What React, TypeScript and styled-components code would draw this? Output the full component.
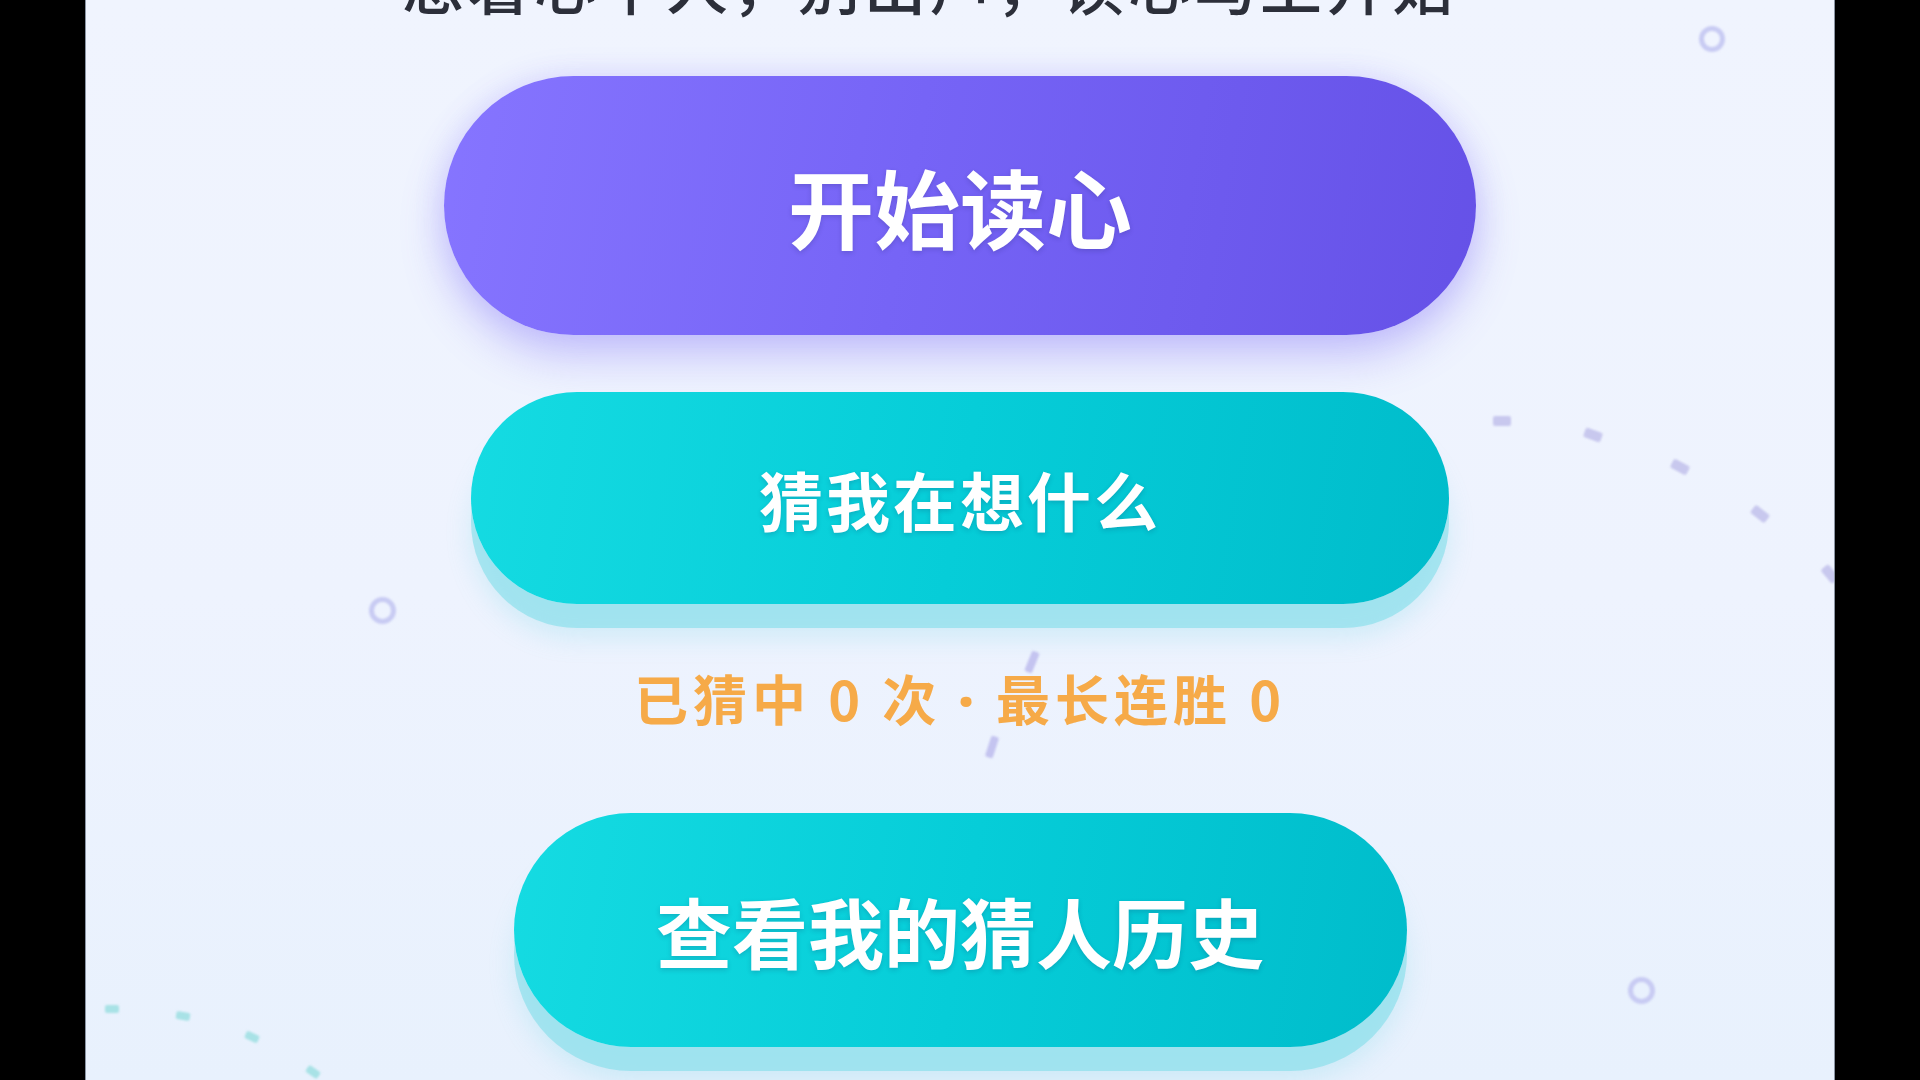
import React from "react";
import styled, { createGlobalStyle } from "styled-components";

const Global = createGlobalStyle`
  html, body { margin: 0; padding: 0; background: #000; }
  body { font-family: "Noto Sans CJK SC", "Noto Sans", sans-serif; }
  * { box-sizing: border-box; }
`;

const Page = styled.div`
  width: 1920px;
  height: 1080px;
  background: #000;
  display: flex;
  justify-content: center;
`;

const Frame = styled.main`
  position: relative;
  width: 1750px;
  height: 1080px;
  overflow: hidden;
  border-left: 1px solid #8a94a3;
  border-right: 1px solid #8a94a3;
  background: linear-gradient(180deg, #f0f4fe 0%, #eef3fe 55%, #e8f1fd 100%);
  display: flex;
  flex-direction: column;
  align-items: center;
`;

const Tagline = styled.p`
  margin: -48px 0 0 -60px;
  font-size: 62px;
  line-height: 1;
  font-weight: 500;
  letter-spacing: 4px;
  color: #2c2f3a;
  white-space: nowrap;
`;

const PillButton = styled.button<{ $w: number; $h: number; $variant: "purple" | "teal"; $fs: number; $ls?: number; $mt: number }>`
  margin-top: ${(p) => p.$mt}px;
  width: ${(p) => p.$w}px;
  height: ${(p) => p.$h}px;
  flex-shrink: 0;
  border: none;
  border-radius: ${(p) => p.$h / 2}px;
  display: flex;
  align-items: center;
  justify-content: center;
  font-family: "Noto Sans CJK SC", "Noto Sans", sans-serif;
  font-weight: 700;
  font-size: ${(p) => p.$fs}px;
  letter-spacing: ${(p) => p.$ls ?? 0}px;
  color: #ffffff;
  text-shadow: 0 2px 5px rgba(20, 30, 80, 0.18);
  cursor: pointer;
  background: ${(p) =>
    p.$variant === "purple"
      ? "linear-gradient(100deg, #8675ff 0%, #7664f6 45%, #6551e7 100%)"
      : "linear-gradient(100deg, #15dbe2 0%, #06cdd8 50%, #00bccb 100%)"};
  box-shadow: ${(p) =>
    p.$variant === "purple"
      ? "0 22px 44px rgba(116, 96, 245, 0.32), 0 0 30px rgba(140, 120, 255, 0.18)"
      : "0 24px 0 rgba(128, 222, 234, 0.6), 0 34px 24px rgba(120, 215, 230, 0.25)"};
`;

const Stats = styled.div`
  margin-top: 64px;
  font-size: 54px;
  line-height: 60px;
  font-weight: 700;
  letter-spacing: 5px;
  color: #f6aa48;
  white-space: nowrap;
`;

const Dot = styled.span`
  font-family: "Noto Sans", sans-serif;
  font-weight: 900;
  margin: 0 17px;
`;

const Ring = styled.span<{ $x: number; $y: number; $d: number }>`
  position: absolute;
  left: ${(p) => p.$x - p.$d / 2}px;
  top: ${(p) => p.$y - p.$d / 2}px;
  width: ${(p) => p.$d}px;
  height: ${(p) => p.$d}px;
  border-radius: 50%;
  border: 5px solid #c8cbf3;
  filter: blur(1px);
`;

const Dash = styled.span<{ $x: number; $y: number; $w: number; $h: number; $r: number; $c: string }>`
  position: absolute;
  left: ${(p) => p.$x - p.$w / 2}px;
  top: ${(p) => p.$y - p.$h / 2}px;
  width: ${(p) => p.$w}px;
  height: ${(p) => p.$h}px;
  border-radius: 2px;
  background: ${(p) => p.$c};
  transform: rotate(${(p) => p.$r}deg);
  filter: blur(0.8px);
`;

const rings = [
  { x: 1626, y: 39, d: 26 },
  { x: 296, y: 610, d: 27 },
  { x: 1555, y: 990, d: 27 },
];

const purple = "#c8c8ee";
const teal = "#a8e2e6";

const dashes = [
  { x: 1416, y: 421, w: 18, h: 10, r: 0, c: purple },
  { x: 1507, y: 435, w: 18, h: 10, r: 20, c: purple },
  { x: 1594, y: 467, w: 18, h: 10, r: 28, c: purple },
  { x: 1674, y: 514, w: 18, h: 10, r: 38, c: purple },
  { x: 1744, y: 574, w: 18, h: 10, r: 50, c: purple },
  { x: 946, y: 662, w: 8, h: 22, r: 22, c: "#c4c4f0" },
  { x: 906, y: 747, w: 8, h: 22, r: 18, c: "#c4c4f0" },
  { x: 26, y: 1009, w: 14, h: 8, r: 0, c: teal },
  { x: 97, y: 1016, w: 14, h: 8, r: 10, c: teal },
  { x: 166, y: 1037, w: 14, h: 8, r: 25, c: teal },
  { x: 227, y: 1072, w: 14, h: 8, r: 35, c: teal },
];

export default function App() {
  return (
    <>
      <Global />
      <Page>
        <Frame>
          {rings.map((r, i) => (
            <Ring key={`r${i}`} $x={r.x} $y={r.y} $d={r.d} />
          ))}
          {dashes.map((d, i) => (
            <Dash key={`d${i}`} $x={d.x} $y={d.y} $w={d.w} $h={d.h} $r={d.r} $c={d.c} />
          ))}
          <Tagline>想着心中人，别出声，读心马上开始</Tagline>
          <PillButton $variant="purple" $w={1032} $h={259} $fs={86} $mt={76 - 14}>
            开始读心
          </PillButton>
          <PillButton $variant="teal" $w={978} $h={212} $fs={64} $ls={3} $mt={57}>
            猜我在想什么
          </PillButton>
          <Stats>
            已猜中 0 次<Dot>·</Dot>最长连胜 0
          </Stats>
          <PillButton $variant="teal" $w={893} $h={234} $fs={76} $mt={83}>
            查看我的猜人历史
          </PillButton>
        </Frame>
      </Page>
    </>
  );
}
